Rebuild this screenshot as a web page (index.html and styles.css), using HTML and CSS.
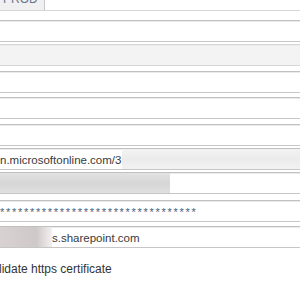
FILE: index.html
```
<!doctype html>
<html lang="en">
<head>
<meta charset="utf-8">
<title>Connection settings</title>
<link rel="stylesheet" href="styles.css">
</head>
<body>
  <div class="tabs">
    <div class="tab"><span>PROD</span></div>
  </div>
  <div class="panel">
    <div class="field"></div>
    <div class="field field-disabled gap-s"></div>
    <div class="field gap-l"></div>
    <div class="field gap-m"></div>
    <div class="field gap-l"></div>
    <div class="field gap-s">
      <span class="value">n.microsoftonline.com/3</span>
      <span class="blur blur-light"></span>
    </div>
    <div class="field gap-s">
      <span class="blur blur-dark"></span>
    </div>
    <div class="field gap-x">
      <span class="value password">*********************************</span>
    </div>
    <div class="field gap-m">
      <span class="blur blur-pink"></span>
      <span class="value">s.sharepoint.com</span>
    </div>
    <div class="check">lidate https certificate</div>
  </div>
</body>
</html>
```

FILE: styles.css
```
* {
  margin: 0;
  padding: 0;
  box-sizing: border-box;
}
body {
  background: #fff;
  font-family: "Liberation Sans", Arial, sans-serif;
  font-size: 11.5px;
  color: #333;
  overflow: hidden;
}
.tabs {
  height: 11px;
  border-bottom: 1px solid #d6d6d6;
  display: flex;
}
.tab {
  width: 45px;
  height: 10px;
  background: #f0f0f0;
  border-right: 1px solid #c8c8c8;
  color: #6a7590;
  font-size: 12px;
  line-height: 12px;
  padding-left: 3px;
  overflow: hidden;
}
.tab span {
  display: block;
  margin-top: -7px;
}
.panel {
  padding-top: 9px;
  display: flex;
  flex-direction: column;
}
.field {
  height: 22px;
  border-top: 1px solid #c0c0c0;
  border-bottom: 1px solid #c6c6c6;
  box-shadow: inset 0 1px 0 #ebebeb;
  display: flex;
  align-items: center;
  white-space: nowrap;
  overflow: hidden;
}
.field-disabled {
  background: #f3f3f3;
  border-color: #d6d6d6;
}
.gap-s { margin-top: 2px; }
.gap-m { margin-top: 4px; }
.gap-l { margin-top: 5px; }
.gap-x { margin-top: 6px; }
.value {
  color: #3a3a3a;
  padding-top: 1px;
}
.password {
  color: #4e5f78;
  letter-spacing: 1.7px;
  font-size: 11px;
}
.blur {
  align-self: stretch;
}
.blur-light {
  flex: 1;
  margin-left: 1px;
  background: linear-gradient(#f3f3f3, #ebebeb 50%, #f2f2f2);
}
.blur-dark {
  width: 170px;
  background: linear-gradient(#e2e2e2, #d6d6d6 50%, #e0e0e0);
}
.blur-pink {
  width: 52px;
  background: linear-gradient(90deg, #d8d2d3, #cfc8c9 70%, #f4f0f1);
}
.check {
  margin-top: 14px;
  color: #333;
  font-size: 12px;
  margin-left: -1px;
}
```
